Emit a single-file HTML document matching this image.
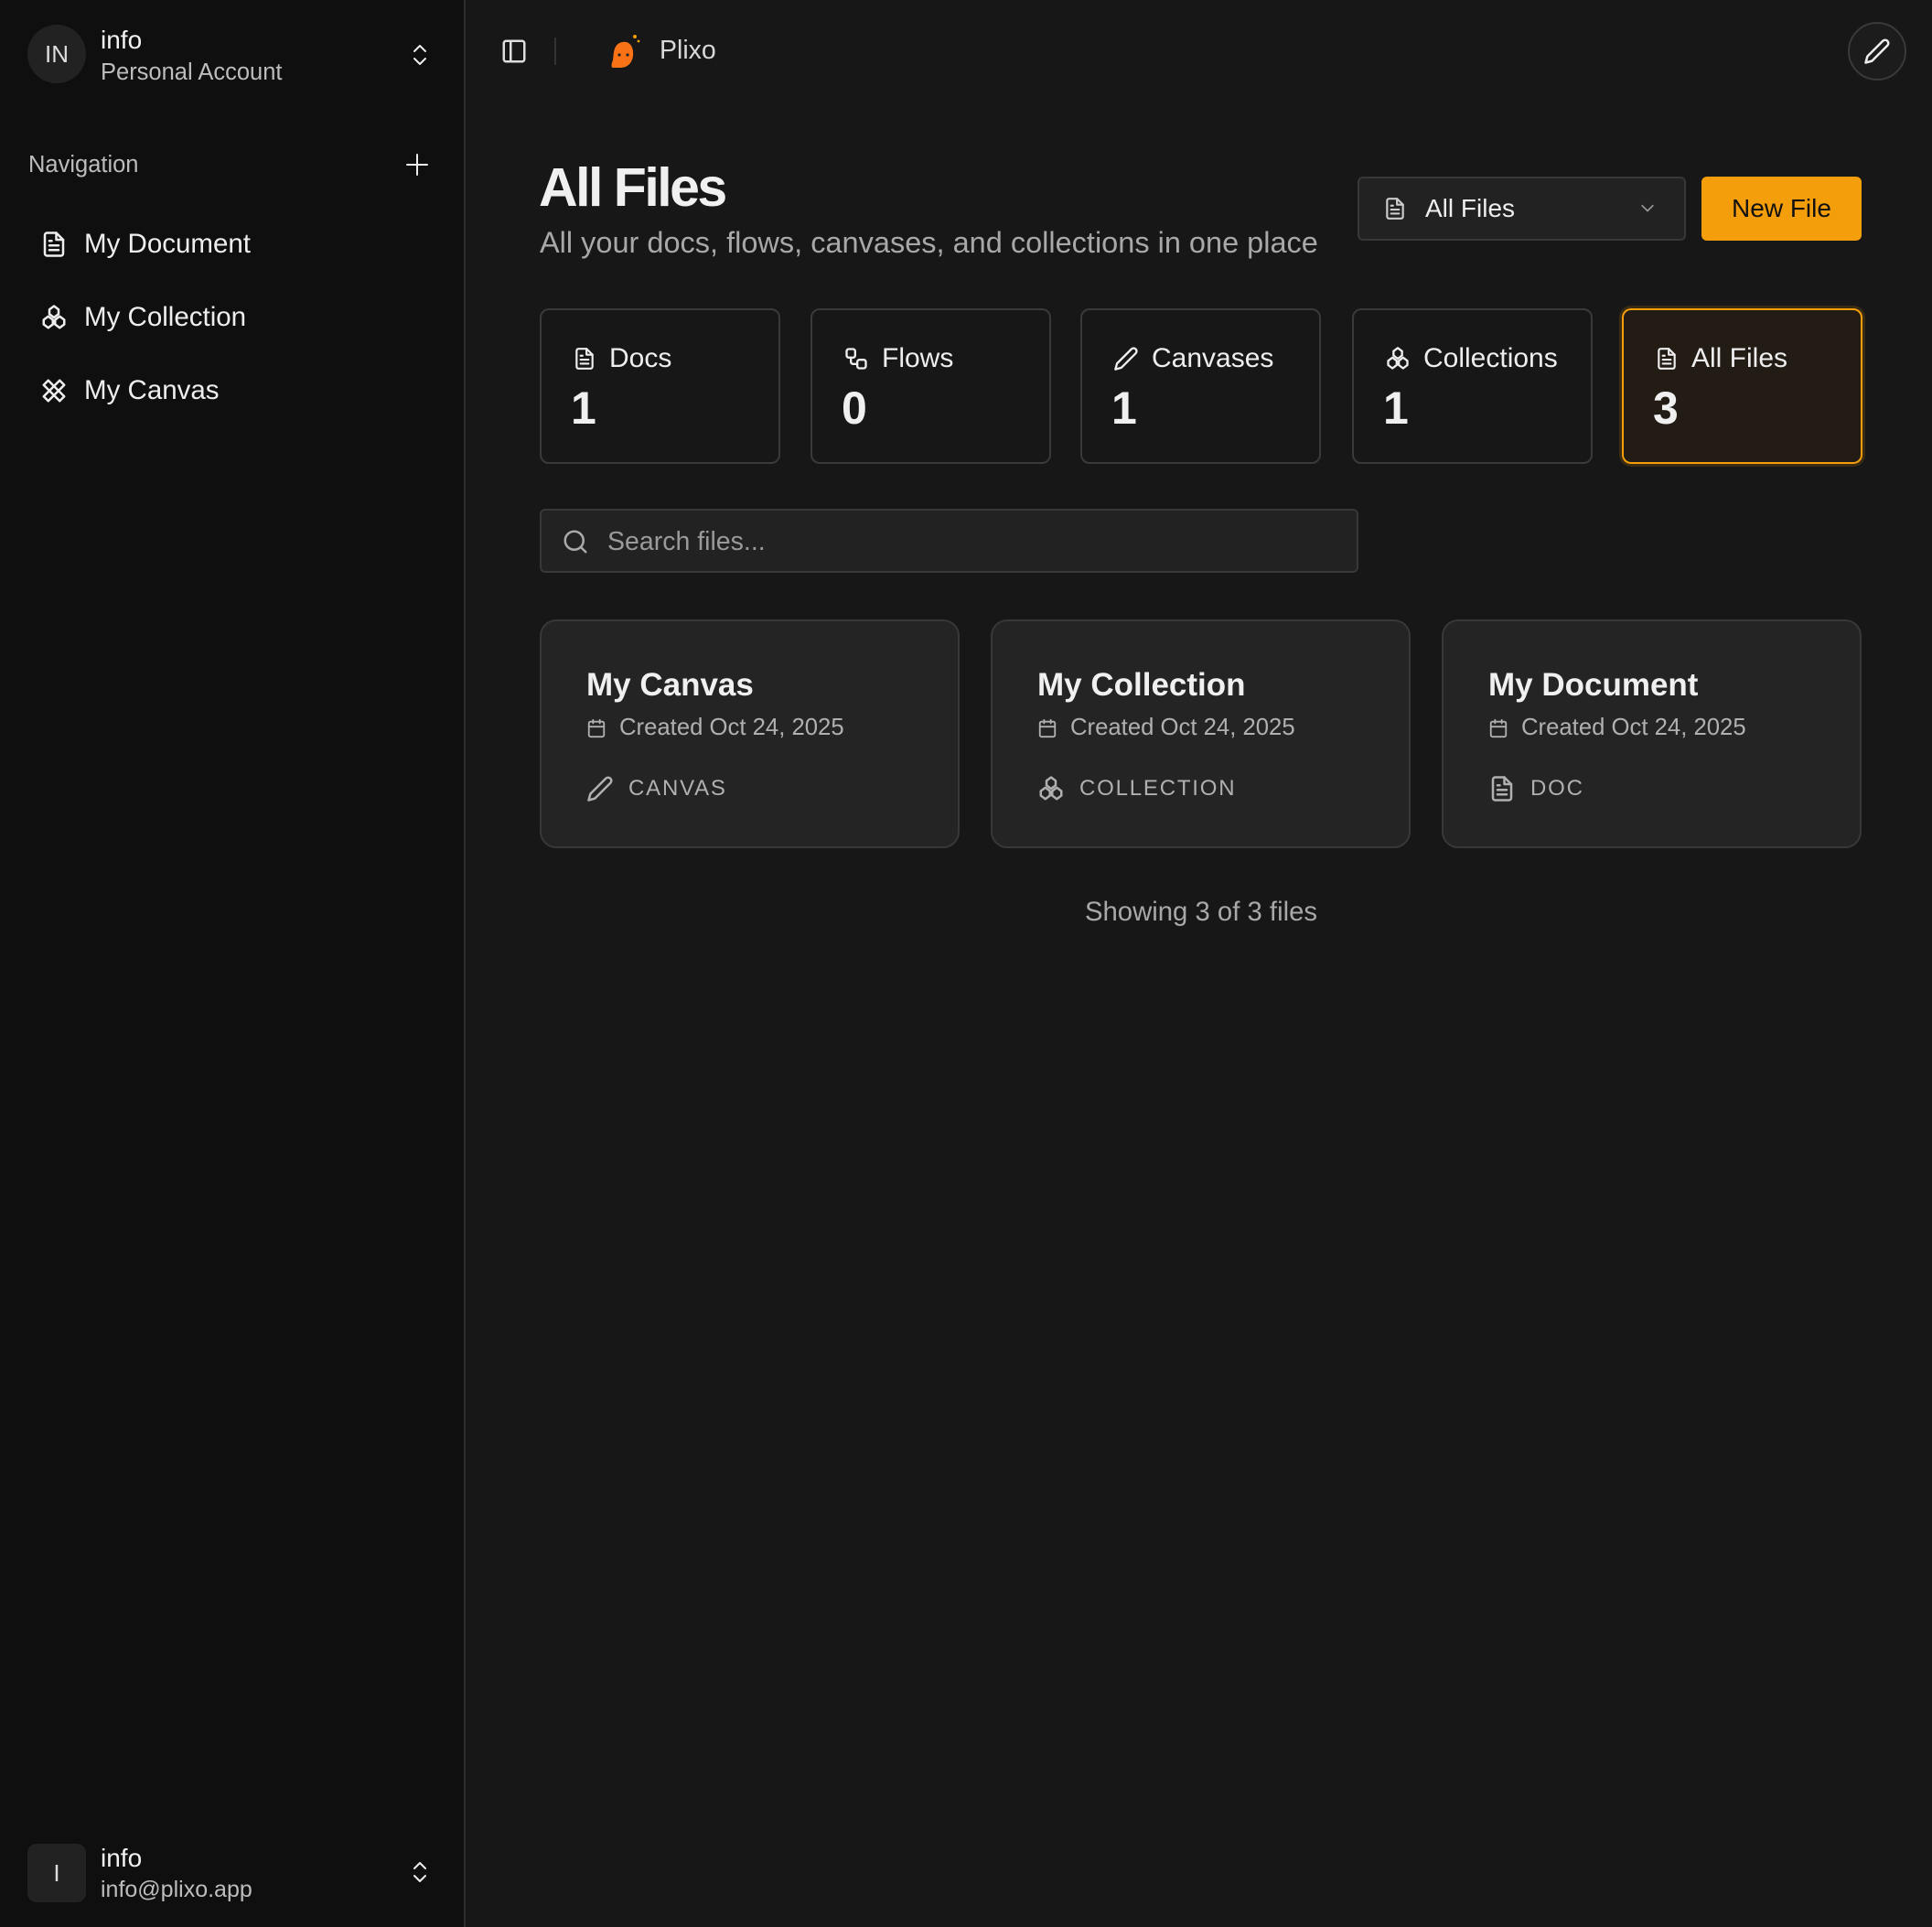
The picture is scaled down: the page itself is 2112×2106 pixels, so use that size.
<!DOCTYPE html>
<html><head><meta charset="utf-8"><style>
*{box-sizing:border-box;margin:0;padding:0}
body{width:2112px;height:2106px;background:#171717;font-family:"Liberation Sans",sans-serif;color:#ededed;position:relative;overflow:hidden}
.abs{position:absolute}
svg{fill:none;stroke:currentColor;stroke-width:2;stroke-linecap:round;stroke-linejoin:round}
#side{left:0;top:0;width:509px;height:2106px;background:#0f0f0f;border-right:2px solid #2e2e2e}
.nav{position:absolute;left:44px;font-size:29.5px;color:#eee;display:flex;align-items:center;gap:18px}
.stat{position:absolute;top:337px;width:263px;height:170px;border:2px solid #3a3a3a;border-radius:10px;background:#171717}
.stat .lbl{position:absolute;left:34px;top:36px;font-size:30px;display:flex;align-items:center;gap:14px;color:#eee}
.stat .num{position:absolute;left:32px;top:78px;font-size:50px;font-weight:bold;color:#f0f0f0}
.fc{position:absolute;top:677px;width:459px;height:250px;border:2px solid #383838;border-radius:18px;background:#242424}
.fc .t{position:absolute;left:49px;top:50px;font-size:35px;font-weight:bold;color:#f0f0f0}
.fc .d{position:absolute;left:49px;top:102px;font-size:25.7px;color:#b0b0b0;display:flex;align-items:center;gap:14px}
.fc .k{position:absolute;left:49px;top:168px;font-size:24px;color:#b0b0b0;letter-spacing:1.8px;display:flex;align-items:center;gap:16px}
</style></head><body>
<div id="side" class="abs">
  <div class="abs" style="left:30px;top:27px;width:64px;height:64px;border-radius:50%;background:#222;color:#ddd;font-size:26px;display:flex;align-items:center;justify-content:center">IN</div>
  <div class="abs" style="left:110px;top:28px;font-size:28px;color:#f2f2f2">info</div>
  <div class="abs" style="left:110px;top:65px;font-size:25.5px;color:#bdbdbd">Personal Account</div>
  <svg class="abs" style="left:447px;top:47px" width="24" height="26" viewBox="0 0 24 26"><path d="M6 9l6-6 6 6M6 17l6 6 6-6"/></svg>
  <div class="abs" style="left:31px;top:166px;font-size:25.5px;color:#bdbdbd">Navigation</div>
  <svg class="abs" style="left:443px;top:167px" width="26" height="26" viewBox="0 0 26 26"><path d="M13 2v22M2 13h22"/></svg>
  <div class="nav" style="top:250px"><svg width="30" height="34" viewBox="0 0 24 24"><path d="M14 2H6a2 2 0 0 0-2 2v16a2 2 0 0 0 2 2h12a2 2 0 0 0 2-2V8z"/><path d="M14 2v6h6M16 13H8M16 17H8M10 9H8"/></svg>My Document</div>
  <div class="nav" style="top:330px"><svg width="30" height="34" viewBox="0 0 24 24"><path d="M12 2l4 3v4l-4 3-4-3V5z"/><path d="M7 11l4 3v4l-4 3-4-3v-4z"/><path d="M17 11l4 3v4l-4 3-4-3v-4z"/></svg>My Collection</div>
  <div class="nav" style="top:410px"><svg width="30" height="34" viewBox="0 0 24 24"><path d="M3 7l4-4 14 14-4 4z"/><path d="M17 3l4 4L7 21l-4-4z"/></svg>My Canvas</div>
  <div class="abs" style="left:30px;top:2015px;width:64px;height:64px;border-radius:10px;background:#222;color:#ddd;font-size:26px;display:flex;align-items:center;justify-content:center">I</div>
  <div class="abs" style="left:110px;top:2015px;font-size:28px;color:#f2f2f2">info</div>
  <div class="abs" style="left:110px;top:2051px;font-size:25px;color:#bdbdbd">info@plixo.app</div>
  <svg class="abs" style="left:447px;top:2033px" width="24" height="26" viewBox="0 0 24 26"><path d="M6 9l6-6 6 6M6 17l6 6 6-6"/></svg>
</div>
<svg class="abs" style="left:547px;top:41px;color:#ddd" width="30" height="30" viewBox="0 0 24 24"><rect x="3" y="3" width="18" height="18" rx="2"/><path d="M9 3v18"/></svg>
<div class="abs" style="left:606px;top:41px;width:2px;height:30px;background:#333"></div>
<svg class="abs" style="left:662px;top:34px" width="40" height="44" viewBox="0 0 40 44"><path d="M8 40c-2 0-2-4 0-8 1-6 0-18 10-20 10-2 13 8 12 15-1 8-6 13-14 13z" fill="#f97316" stroke="none"/><circle cx="15" cy="26" r="1.6" fill="#222" stroke="none"/><circle cx="24" cy="26" r="1.6" fill="#222" stroke="none"/><circle cx="32" cy="6" r="2" fill="#f59e0b" stroke="none"/><circle cx="36" cy="11" r="1.4" fill="#f59e0b" stroke="none"/></svg>
<div class="abs" style="left:721px;top:39px;font-size:28.5px;color:#d8d8d8">Plixo</div>
<div class="abs" style="left:2020px;top:24px;width:64px;height:64px;border-radius:50%;border:2px solid #3a3a3a;background:#1c1c1c"></div>
<svg class="abs" style="left:2037px;top:41px;color:#eee" width="30" height="30" viewBox="0 0 24 24"><path d="M17 3a2.8 2.8 0 1 1 4 4L7.5 20.5 2 22l1.5-5.5z"/></svg>

<div class="abs" style="left:589px;top:171px;font-size:59px;font-weight:bold;letter-spacing:-2.5px;color:#f0f0f0">All Files</div>
<div class="abs" style="left:590px;top:247px;font-size:32.5px;color:#a8a8a8">All your docs, flows, canvases, and collections in one place</div>
<div class="abs" style="left:1484px;top:193px;width:359px;height:70px;border:2px solid #383838;border-radius:6px;background:#222"></div>
<svg class="abs" style="left:1512px;top:213px;color:#ccc" width="26" height="30" viewBox="0 0 24 24"><path d="M14 2H6a2 2 0 0 0-2 2v16a2 2 0 0 0 2 2h12a2 2 0 0 0 2-2V8z"/><path d="M14 2v6h6M16 13H8M16 17H8M10 9H8"/></svg>
<div class="abs" style="left:1558px;top:212px;font-size:28px;color:#eee">All Files</div>
<svg class="abs" style="left:1790px;top:218px;color:#999" width="22" height="20" viewBox="0 0 24 24"><path d="M5 8l7 7 7-7"/></svg>
<div class="abs" style="left:1860px;top:193px;width:175px;height:70px;border-radius:6px;background:#f59e0b;color:#111;font-size:28px;display:flex;align-items:center;justify-content:center">New File</div>

<div class="stat" style="left:590px"><div class="lbl"><svg width="26" height="32" viewBox="0 0 24 24"><path d="M14 2H6a2 2 0 0 0-2 2v16a2 2 0 0 0 2 2h12a2 2 0 0 0 2-2V8z"/><path d="M14 2v6h6M16 13H8M16 17H8M10 9H8"/></svg>Docs</div><div class="num">1</div></div>
<div class="stat" style="left:886px"><div class="lbl"><svg width="28" height="30" viewBox="0 0 24 24"><rect x="3" y="3" width="8" height="8" rx="2"/><rect x="13" y="13" width="8" height="8" rx="2"/><path d="M7 11v4a2 2 0 0 0 2 2h4"/></svg>Flows</div><div class="num">0</div></div>
<div class="stat" style="left:1181px"><div class="lbl"><svg width="28" height="30" viewBox="0 0 24 24"><path d="M17 3a2.8 2.8 0 1 1 4 4L7.5 20.5 2 22l1.5-5.5z"/></svg>Canvases</div><div class="num">1</div></div>
<div class="stat" style="left:1478px"><div class="lbl"><svg width="28" height="32" viewBox="0 0 24 24"><path d="M12 2l4 3v4l-4 3-4-3V5z"/><path d="M7 11l4 3v4l-4 3-4-3v-4z"/><path d="M17 11l4 3v4l-4 3-4-3v-4z"/></svg>Collections</div><div class="num">1</div></div>
<div class="stat" style="left:1773px;border-color:#f59e0b;background:#221c15;box-shadow:0 0 0 3px #3a2c14"><div class="lbl"><svg width="26" height="32" viewBox="0 0 24 24"><path d="M14 2H6a2 2 0 0 0-2 2v16a2 2 0 0 0 2 2h12a2 2 0 0 0 2-2V8z"/><path d="M14 2v6h6M16 13H8M16 17H8M10 9H8"/></svg>All Files</div><div class="num">3</div></div>

<div class="abs" style="left:590px;top:556px;width:895px;height:70px;border:2px solid #383838;border-radius:6px;background:#222"></div>
<svg class="abs" style="left:614px;top:577px;color:#aaa" width="30" height="30" viewBox="0 0 24 24"><circle cx="11" cy="11" r="8"/><path d="M21 21l-4.3-4.3"/></svg>
<div class="abs" style="left:664px;top:576px;font-size:28.5px;color:#9a9a9a">Search files...</div>

<div class="fc" style="left:590px"><div class="t">My Canvas</div><div class="d"><svg width="22" height="24" viewBox="0 0 24 24"><rect x="3" y="4" width="18" height="18" rx="2"/><path d="M16 2v4M8 2v4M3 10h18"/></svg>Created Oct 24, 2025</div><div class="k"><svg width="30" height="30" viewBox="0 0 24 24"><path d="M17 3a2.8 2.8 0 1 1 4 4L7.5 20.5 2 22l1.5-5.5z"/></svg>CANVAS</div></div>
<div class="fc" style="left:1083px"><div class="t">My Collection</div><div class="d"><svg width="22" height="24" viewBox="0 0 24 24"><rect x="3" y="4" width="18" height="18" rx="2"/><path d="M16 2v4M8 2v4M3 10h18"/></svg>Created Oct 24, 2025</div><div class="k"><svg width="30" height="30" viewBox="0 0 24 24"><path d="M12 2l4 3v4l-4 3-4-3V5z"/><path d="M7 11l4 3v4l-4 3-4-3v-4z"/><path d="M17 11l4 3v4l-4 3-4-3v-4z"/></svg>COLLECTION</div></div>
<div class="fc" style="left:1576px"><div class="t">My Document</div><div class="d"><svg width="22" height="24" viewBox="0 0 24 24"><rect x="3" y="4" width="18" height="18" rx="2"/><path d="M16 2v4M8 2v4M3 10h18"/></svg>Created Oct 24, 2025</div><div class="k"><svg width="30" height="30" viewBox="0 0 24 24"><path d="M14 2H6a2 2 0 0 0-2 2v16a2 2 0 0 0 2 2h12a2 2 0 0 0 2-2V8z"/><path d="M14 2v6h6M16 13H8M16 17H8M10 9H8"/></svg>DOC</div></div>

<div class="abs" style="left:1063px;top:980px;width:500px;text-align:center;font-size:29.3px;color:#a8a8a8">Showing 3 of 3 files</div>
</body></html>
